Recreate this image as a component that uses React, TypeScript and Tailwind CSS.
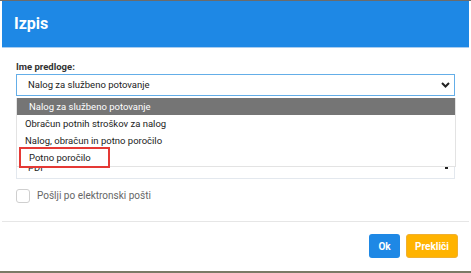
import { useState } from "react";

const predloge = [
  "Nalog za službeno potovanje",
  "Obračun potnih stroškov za nalog",
  "Nalog, obračun in potno poročilo",
  "Potno poročilo",
];

function Chevron() {
  return (
    <svg width="9" height="6" viewBox="0 0 9 6" className="text-[#222]">
      <polyline
        points="1,1 4.5,4.5 8,1"
        fill="none"
        stroke="currentColor"
        strokeWidth="2"
      />
    </svg>
  );
}

export default function App() {
  const [izbrano] = useState(0);

  return (
    <main className="relative flex h-[273px] w-[471px] flex-col border-t border-[#6b6b6b] border-b-2 border-b-[#7a7a66] bg-white font-['Roboto',sans-serif]">
      <section className="mx-[2px] flex flex-1 flex-col">
        <header className="flex h-[47px] items-center border-b border-[#a9cdf0] bg-[#1e88e5] px-3">
          <h1 className="text-[16px] font-bold text-white">Izpis</h1>
        </header>

        <div className="px-[14px] pt-[12px]">
          <label className="block text-[9.5px] font-bold leading-[13px] text-[#333]">
            Ime predloge:
          </label>
          <div className="mt-[1px] flex h-[22px] items-center justify-between border border-[#64aee8] pl-[11px] pr-[4px] text-[9.5px] text-[#222]">
            <span>{predloge[izbrano]}</span>
            <Chevron />
          </div>

          <div className="mt-[61px] flex h-[22px] items-center justify-between border border-[#e3e8ee] pl-[11px] pr-[6px] text-[9.5px] text-[#222]">
            <span>PDF</span>
            <span className="h-[2px] w-[3px] bg-[#222]" />
          </div>

          <label className="mt-[9px] flex items-center gap-[7px] text-[10px] text-[#666]">
            <span className="h-[14px] w-[14px] rounded-[3px] border border-[#cfcfcf] bg-white" />
            Pošlji po elektronski pošti
          </label>
        </div>

        <footer className="mt-auto flex justify-end gap-[6px] border-t border-[#e6e6e6] pt-[12px] pb-[13px] pr-[11px]">
          <button className="h-[24px] w-[31px] rounded-[3px] bg-[#1e88e5] text-[10px] font-bold text-white">
            Ok
          </button>
          <button className="h-[24px] w-[52px] rounded-[3px] border border-[#f0b030] bg-[#ffb300] text-[10px] font-bold text-white">
            Prekliči
          </button>
        </footer>
      </section>

      <ul className="absolute left-[16px] top-[97px] w-[440px] border-x border-b border-[#e3e3e3] bg-white text-[9.5px] leading-[17px] text-[#222]">
        {predloge.map((item, i) => (
          <li
            key={item}
            className={
              i === izbrano
                ? "bg-[#757575] pl-[12px] text-white"
                : i === 3
                  ? "pl-[12px]"
                  : "pl-[8px]"
            }
          >
            {item}
          </li>
        ))}
      </ul>

      <div className="absolute left-[19px] top-[146px] h-[21px] w-[91px] border-2 border-[#e53935]" />
    </main>
  );
}
